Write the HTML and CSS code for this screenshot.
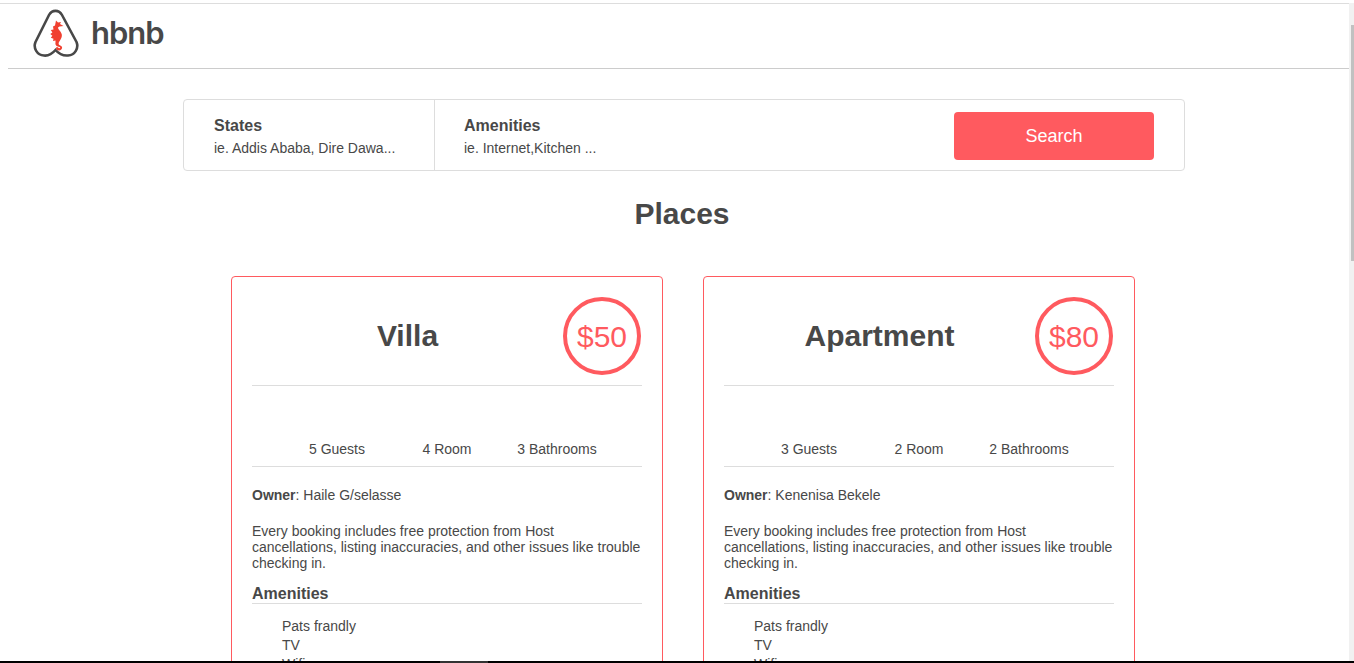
FILE: index.html
```html
<!DOCTYPE html>
<html lang="en">
<head>
    <meta charset="UTF-8">
    <title>AirBnB clone</title>
    <link rel="stylesheet" href="styles.css">
</head>
<body>

<header>
    <svg class="logo-mark" viewBox="0 0 46 48" width="46" height="48">
        <path class="logo-outline" d="M22.5 41C26 45 30 47 35 46.5C42 46 46 39 43.5 33L29 6C26 0.5 19 0.5 16 6L2.5 33C0 39 4 46 11 46.5C15 47 19 45 22.5 41Z"/>
        <path class="logo-horse" d="M23 11.5L25 13.5L28 13L27 15L30.5 17L26.5 17.5L25 18.5C25 20.5 28 22 28.8 25.5C29.3 29 26.8 31.5 25.8 33.5C25.3 35 25.8 36 27.3 36.5C29.3 37 29.8 39 28.3 40.5C26.8 42 23.5 41.7 23 39.5C22.8 38 24.5 37.5 25 38.5C25.5 39.5 27 39.5 27.2 38.8C27.4 38 26 37.8 24.8 37.5C23 37 22 35.5 22.5 33.5L22.5 31.5L20 32L20.5 29.8L17.8 28.8L19.4 26.8L17.3 25L19.4 23.5L17.8 21L20.5 20.5L20 17.5L22 16.5Z"/>
    </svg>
    <span class="logo-text">hbnb</span>
</header>

<main>
    <section class="filters">
        <div class="filter filter-states">
            <h3>States</h3>
            <h4>ie. Addis Ababa, Dire Dawa...</h4>
        </div>
        <div class="filter filter-amenities">
            <h3>Amenities</h3>
            <h4>ie. Internet,Kitchen ...</h4>
        </div>
        <button>Search</button>
    </section>

    <h1>Places</h1>

    <section class="places">
        <!-- Villa -->
        <article class="place">
            <div class="place-head">
                <h2>Villa</h2>
                <div class="price">$50</div>
            </div>
            <div class="place-info">
                <span>5 Guests</span>
                <span>4 Room</span>
                <span>3 Bathrooms</span>
            </div>
            <p class="owner"><b>Owner</b>: Haile G/selasse</p>
            <p class="description">Every booking includes free protection from Host cancellations, listing inaccuracies, and other issues like trouble checking in.</p>
            <h3>Amenities</h3>
            <ul>
                <li>Pats frandly</li>
                <li>TV</li>
                <li>Wifi</li>
            </ul>
        </article>

        <!-- Apartment -->
        <article class="place">
            <div class="place-head">
                <h2>Apartment</h2>
                <div class="price">$80</div>
            </div>
            <div class="place-info">
                <span>3 Guests</span>
                <span>2 Room</span>
                <span>2 Bathrooms</span>
            </div>
            <p class="owner"><b>Owner</b>: Kenenisa Bekele</p>
            <p class="description">Every booking includes free protection from Host cancellations, listing inaccuracies, and other issues like trouble checking in.</p>
            <h3>Amenities</h3>
            <ul>
                <li>Pats frandly</li>
                <li>TV</li>
                <li>Wifi</li>
            </ul>
        </article>
    </section>
</main>

<!-- window edge: scrollbar and the dark strip at the bottom of the capture -->
<div class="scroll-track"><div class="scroll-thumb"></div></div>
<div class="bottom-strip"><div class="strip-tab"></div></div>

</body>
</html>
```

FILE: styles.css
```css
* {
    margin: 0;
    padding: 0;
    box-sizing: border-box;
}

html, body {
    height: 663px;
    overflow: hidden;
}

body {
    font-family: "Liberation Sans", Arial, sans-serif;
    font-size: 14px;
    color: #484848;
    background: #fff;
    padding-top: 3px;
}

header {
    display: flex;
    align-items: center;
    height: 66px;
    margin: 0 5px 0 8px;
    padding-left: 25px;
    border-bottom: 1px solid #ccc;
    position: relative;
}

/* light line on top of the window */
header::before {
    content: "";
    position: absolute;
    top: 0;
    left: -8px;
    right: 0;
    height: 1px;
    background: #ddd;
}

.logo-mark {
    flex: none;
    margin-top: -5px;
}

.logo-outline {
    fill: none;
    stroke: #484848;
    stroke-width: 2.6;
}

.logo-horse {
    fill: #f04030;
}

.logo-text {
    margin-left: 12px;
    margin-top: -6px;
    font-family: Inter, sans-serif;
    font-size: 31px;
    font-weight: 600;
    letter-spacing: -1px;
}

main {
    padding-top: 30px;
}

.filters {
    display: flex;
    align-items: center;
    width: 1002px;
    height: 72px;
    margin: 0 auto 0 183px;
    border: 1px solid #ddd;
    border-radius: 4px;
}

.filter {
    height: 100%;
    padding-top: 17px;
}

.filter h3 {
    font-size: 16px;
    line-height: 18px;
}

.filter h4 {
    font-size: 14px;
    font-weight: normal;
    line-height: 16px;
    margin-top: 5px;
}

.filter-states {
    width: 251px;
    padding-left: 30px;
    border-right: 1px solid #ddd;
}

.filter-amenities {
    padding-left: 29px;
    flex: 1;
}

.filters button {
    width: 200px;
    height: 48px;
    margin-top: 2px;
    margin-right: 30px;
    border: none;
    border-radius: 4px;
    background: #ff5a5f;
    color: #fff;
    font-family: inherit;
    font-size: 18px;
}

main h1 {
    font-size: 30px;
    line-height: 34px;
    text-align: center;
    margin-top: 26px;
    margin-left: 10px;
}

.places {
    display: flex;
    gap: 40px;
    margin: 45px 0 0 231px;
}

.place {
    flex: none;
    width: 432px;
    height: 600px;
    padding: 0 20px;
    border: 1px solid #ff5a5f;
    border-radius: 4px;
}

.place-head {
    display: flex;
    align-items: center;
    height: 109px;
    padding-top: 9px;
    border-bottom: 1px solid #ddd;
}

.place-head h2 {
    flex: 1;
    font-size: 30px;
    text-align: center;
}

.price {
    flex: none;
    display: flex;
    align-items: center;
    justify-content: center;
    width: 78px;
    height: 78px;
    margin-right: 1px;
    padding-top: 2px;
    border: 4px solid #ff5a5f;
    border-radius: 50%;
    color: #ff5a5f;
    font-size: 30px;
}

.place-info {
    display: flex;
    justify-content: center;
    align-items: flex-end;
    height: 81px;
    padding-bottom: 9px;
    border-bottom: 1px solid #ddd;
}

.place-info span {
    width: 110px;
    text-align: center;
    line-height: 16px;
}

.owner {
    line-height: 16px;
    margin-top: 20px;
}

.description {
    line-height: 16px;
    margin-top: 20px;
}

.place h3 {
    font-size: 16px;
    line-height: 18px;
    margin-top: 14px;
    border-bottom: 1px solid #ddd;
}

.place ul {
    list-style: none;
    padding: 13px 0 0 30px;
}

.place li {
    line-height: 19px;
}

.scroll-track {
    position: absolute;
    top: 3px;
    right: 0;
    bottom: 0;
    width: 5px;
    background: #f1f1f1;
}

.scroll-thumb {
    position: absolute;
    top: 22px;
    right: 0;
    width: 3px;
    height: 236px;
    background: #c1c1c1;
}

.bottom-strip {
    position: absolute;
    left: 0;
    right: 0;
    bottom: 0;
    height: 2px;
    background: #000;
}

.strip-tab {
    position: absolute;
    left: 440px;
    top: 0;
    width: 48px;
    height: 2px;
    background: #333;
}
```
